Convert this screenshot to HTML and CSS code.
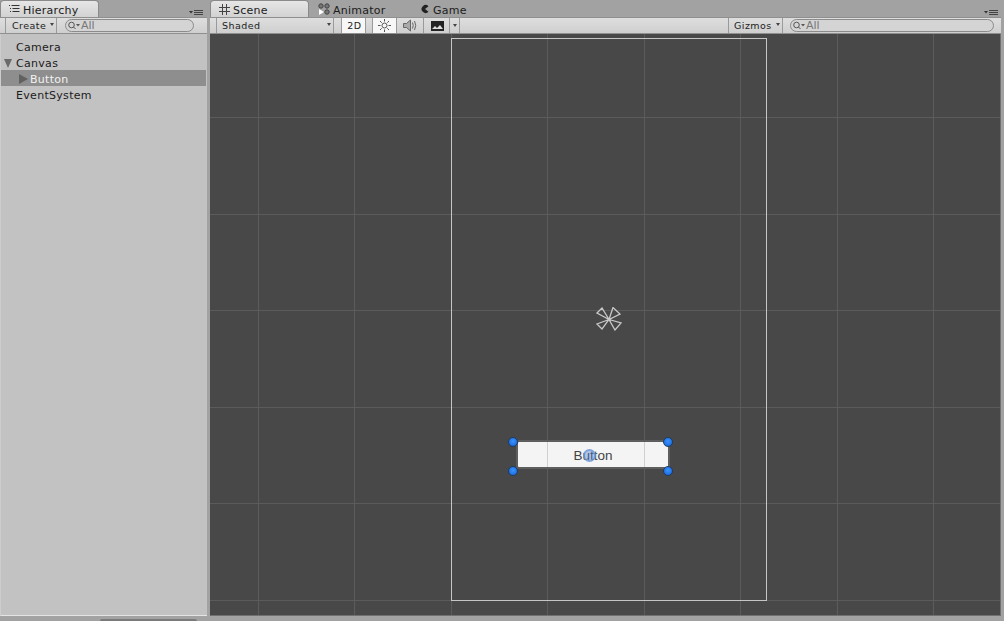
FILE: index.html
```html
<!DOCTYPE html>
<html lang="en">
<head>
<meta charset="utf-8">
<title>Unity Editor</title>
<link rel="stylesheet" href="styles.css">
</head>
<body>
<div class="editor">
  <section class="pane hierarchy">
    <div class="tabbar">
      <div class="tab active hier-tab">
        <svg class="tab-icon" width="12" height="10" viewBox="0 0 12 10"><path d="M1 1.500h1M3.500 1.500h8M2 4.500h1M4.500 4.500h7M2 7.500h1M4.500 7.500h7" stroke="#333" stroke-width="1" fill="none"/></svg>
        <span>Hierarchy</span>
      </div>
      <svg class="pane-menu" width="14" height="7" viewBox="0 0 14 7"><path d="M0 2h4L2 4.500z" fill="#333"/><path d="M5 1.500h9M5 3.500h9M5 5.500h9" stroke="#444" fill="none"/></svg>
    </div>
    <div class="toolbar">
      <div class="tool dropdown create"><span>Create</span><i class="caret"></i></div>
      <div class="search short">
        <svg width="13" height="9" viewBox="0 0 13 9"><circle cx="3.500" cy="4" r="2.800" fill="none" stroke="#555"/><path d="M5.500 6l2 2" stroke="#555"/><path d="M8 3h4l-2 2.500z" fill="#555"/></svg>
        <span>All</span>
      </div>
    </div>
    <ul class="tree">
      <li class="row lvl0">Camera</li>
      <li class="row lvl0"><i class="arrow down"></i>Canvas</li>
      <li class="row lvl1 selected"><i class="arrow right"></i>Button</li>
      <li class="row lvl0">EventSystem</li>
    </ul>
  </section>

  <section class="pane scene">
    <div class="tabbar">
      <div class="tab active scene-tab">
        <svg class="tab-icon" width="11" height="11" viewBox="0 0 11 11"><path d="M3.500 0v11M7.500 0v11M0 3.500h11M0 7.500h11" stroke="#444" fill="none"/></svg>
        <span>Scene</span>
      </div>
      <div class="tab animator-tab">
        <svg class="tab-icon" width="12" height="12" viewBox="0 0 12 12"><circle cx="3" cy="3" r="2.200" fill="#777" stroke="#444"/><circle cx="9" cy="3" r="2.200" fill="#777" stroke="#444"/><circle cx="9" cy="9" r="2.200" fill="#777" stroke="#444"/><path d="M1 6l5 3-5 3z" fill="#fff"/></svg>
        <span>Animator</span>
      </div>
      <div class="tab game-tab">
        <svg class="tab-icon" width="10" height="10" viewBox="0 0 10 10"><path d="M8.500 2.200A4 4 0 1 0 8.500 7.800L5 5z" fill="#222"/></svg>
        <span>Game</span>
      </div>
      <svg class="pane-menu" width="14" height="7" viewBox="0 0 14 7"><path d="M0 2h4L2 4.500z" fill="#333"/><path d="M5 1.500h9M5 3.500h9M5 5.500h9" stroke="#444" fill="none"/></svg>
    </div>
    <div class="toolbar">
      <div class="tool dropdown shaded"><span>Shaded</span><i class="caret"></i></div>
      <div class="tool on two-d"><span>2D</span></div>
      <div class="tool on icon-btn sun">
        <svg width="13" height="13" viewBox="0 0 13 13"><circle cx="6.500" cy="6.500" r="2.500" fill="none" stroke="#555"/><path d="M6.500 0v2.500M6.500 10.500V13M0 6.500h2.500M10.500 6.500H13M2 2l1.700 1.700M9.300 9.300L11 11M11 2L9.300 3.700M3.700 9.300L2 11" stroke="#555" fill="none"/></svg>
      </div>
      <div class="tool icon-btn sound">
        <svg width="15" height="13" viewBox="0 0 15 13"><path d="M0.500 4.500h3L7.500 1v11L3.500 8.500h-3z" fill="#aaa" stroke="#666"/><path d="M9.500 3.500q1.500 3 0 6M11.500 2q2.500 4.500 0 9" stroke="#666" fill="none"/></svg>
      </div>
      <div class="tool icon-btn picture">
        <svg width="13" height="10" viewBox="0 0 13 10"><rect width="13" height="10" fill="#222"/><path d="M1 8l3-3 2 2 3-3 3 4z" fill="#ddd"/></svg>
      </div>
      <div class="tool caret-btn"><i class="caret"></i></div>
      <div class="spring"></div>
      <div class="tool dropdown gizmos"><span>Gizmos</span><i class="caret"></i></div>
      <div class="search long">
        <svg width="13" height="9" viewBox="0 0 13 9"><circle cx="3.500" cy="4" r="2.800" fill="none" stroke="#555"/><path d="M5.500 6l2 2" stroke="#555"/><path d="M8 3h4l-2 2.500z" fill="#555"/></svg>
        <span>All</span>
      </div>
    </div>
    <div class="viewport">
      <svg class="grid" width="792" height="582" viewBox="0 0 792 582">
        <path d="M48.500 0v582M144.500 0v582M241.500 0v582M337.500 0v582M434.500 0v582M530.500 0v582M627.500 0v582M723.500 0v582M0 83.500h792M0 180.500h792M0 276.500h792M0 373.500h792M0 469.500h792M0 566.500h792" stroke="#5b5b5b" fill="none"/>
      </svg>
      <div class="canvas-frame"></div>
      <svg class="cam-gizmo" width="26" height="24" viewBox="0 0 26 24">
        <path d="M13 12.500L1 6 6 1zM13 12.500L17 0.500 24 7zM13 12.500L1 17 6 22zM13 12.500L25 16 19 23z" fill="none" stroke="#c9c9c9" stroke-width="1.300"/>
      </svg>
      <div class="ui-button">
        <div class="ui-guide g1"></div>
        <div class="ui-guide g2"></div>
        <span>Button</span>
        <i class="pivot"></i>
      </div>
      <i class="handle h-tl"></i>
      <i class="handle h-tr"></i>
      <i class="handle h-bl"></i>
      <i class="handle h-br"></i>
    </div>
  </section>
</div>
<div class="statusbar"><i class="scroll-thumb"></i></div>
</body>
</html>
```
FILE: styles.css
```css
* { box-sizing: border-box; }
html, body { margin: 0; height: 100%; }
body {
  width: 1004px;
  height: 621px;
  overflow: hidden;
  background: #a2a2a2;
  font-family: "DejaVu Sans", sans-serif;
  font-size: 11px;
  color: #1a1a1a;
  display: flex;
  flex-direction: column;
}
.editor { display: flex; height: 616px; }
.pane { display: flex; flex-direction: column; }
.hierarchy { width: 207px; }
.scene { width: 791px; margin-left: 3px; }

.tabbar { display: flex; height: 17px; position: relative; flex: none; }
.tab {
  display: flex;
  align-items: center;
  gap: 3px;
  height: 17px;
  padding-left: 9px;
  letter-spacing: 0.25px;
  line-height: 17px;
  padding-top: 3px;
  color: #1c1c1c;
}
.tab.active {
  background: linear-gradient(#e6e6e6, #d2d2d2);
  border: 1px solid #8a8a8a;
  border-bottom: 0;
  border-radius: 4px 4px 0 0;
}
.hier-tab { width: 99px; padding-left: 7px; }
.scene-tab { width: 99px; padding-left: 8px; }
.animator-tab { width: 82px; }
.game-tab { padding-left: 29px; }
.tab-icon { flex: none; margin-top: -3px; }
.pane-menu { position: absolute; right: 3px; top: 9px; }
.hierarchy .pane-menu { right: 4px; }

.toolbar {
  display: flex;
  align-items: stretch;
  height: 17px;
  flex: none;
  background: linear-gradient(#dedede, #cfcfcf);
  border-top: 1px solid #8f8f8f;
  border-bottom: 1px solid #8f8f8f;
  padding-left: 5px;
}
.scene .toolbar { padding-left: 6px; }
.tool {
  display: flex;
  align-items: center;
  border-right: 1px solid #9a9a9a;
  font-size: 9.500px;
  letter-spacing: 0.45px;
  color: #222;
}
.dropdown { position: relative; padding-left: 5px; }
.caret {
  display: block;
  width: 0;
  height: 0;
  border-left: 2.500px solid transparent;
  border-right: 2.500px solid transparent;
  border-top: 3px solid #444;
}
.dropdown .caret { position: absolute; right: 2px; top: 5px; }
.toolbar > .dropdown:first-child { border-left: 1px solid #9a9a9a; }
.create { width: 52px; padding-left: 6px; }
.shaded { width: 118px; }
.on { background: #f7f7f7; }
.two-d { width: 25px; justify-content: center; margin-left: 7px; padding-left: 2px; border-left: 1px solid #9a9a9a; }
.icon-btn { justify-content: center; }
.sun { width: 25px; margin-left: 6px; border-left: 1px solid #9a9a9a; }
.sound { width: 27px; }
.picture { width: 26px; padding-left: 2px; }
.caret-btn { width: 10px; justify-content: center; }
.spring { flex: 1; }
.gizmos { width: 55px; padding-left: 5px; border-left: 1px solid #9a9a9a; }

.search {
  display: flex;
  align-items: center;
  height: 13px;
  align-self: center;
  border: 1px solid #8b8b8b;
  border-radius: 7px;
  background: #d4d4d4;
  padding-left: 2px;
  color: #777;
  line-height: 11px;
  font-size: 11px;
}
.search span { margin-top: -1px; }
.short { width: 129px; margin-left: 8px; }
.long { width: 204px; margin-left: 7px; margin-right: 7px; }

.tree {
  list-style: none;
  margin: 0;
  padding: 4px 0 0;
  flex: 1;
  background: #c2c2c2;
  border-bottom: 1px solid #e4e4e4;
  border-left: 1px solid #cdcdcd;
}
.row {
  height: 16px;
  line-height: 16px;
  padding-top: 2px;
  position: relative;
  letter-spacing: 0.3px;
  color: #1c1c1c;
}
.lvl0 { padding-left: 15px; }
.lvl1 { padding-left: 29px; }
.selected { background: #8e8e8e; color: #f2f2f2; width: 205px; }
.arrow { position: absolute; width: 0; height: 0; }
.arrow.down {
  left: 3px;
  top: 5px;
  border-left: 4.500px solid transparent;
  border-right: 4.500px solid transparent;
  border-top: 9px solid #6a6a6a;
}
.arrow.right {
  left: 18px;
  top: 4px;
  border-top: 5px solid transparent;
  border-bottom: 5px solid transparent;
  border-left: 9px solid #616161;
}

.viewport {
  position: relative;
  width: 791px;
  height: 582px;
  background: #484848;
  border-bottom: 1px solid #707070;
  border-right: 1px solid #707070;
  overflow: hidden;
}
.grid { position: absolute; left: 0; top: 0; }
.canvas-frame {
  position: absolute;
  left: 241px;
  top: 4px;
  width: 316px;
  height: 563px;
  border: 1px solid #c6c6c6;
}
.cam-gizmo { position: absolute; left: 386px; top: 273px; }
.ui-button {
  position: absolute;
  left: 306px;
  top: 406px;
  width: 154px;
  height: 29px;
  padding-top: 1px;
  background: #f4f4f4;
  border: 2px solid #5e5e5e;
  border-radius: 3px;
  display: flex;
  align-items: center;
  justify-content: center;
  font-family: "Liberation Sans", sans-serif;
  font-size: 13.500px;
  color: #444;
}
.ui-guide { position: absolute; top: 0; bottom: 0; width: 1px; background: #cfcfcf; }
.g1 { left: 29px; }
.g2 { left: 126px; }
.pivot {
  position: absolute;
  left: 65px;
  top: 7px;
  width: 13px;
  height: 13px;
  border-radius: 50%;
  background: rgba(70, 130, 220, 0.4);
  border: 2px solid rgba(110, 150, 210, 0.7);
}
.handle {
  position: absolute;
  width: 10px;
  height: 10px;
  border-radius: 50%;
  background: radial-gradient(circle at 50% 40%, #3a94ff, #1462d4);
  border: 1px solid #1d3b66;
}
.h-tl { left: 298px; top: 403px; }
.h-tr { left: 453px; top: 403px; }
.h-bl { left: 298px; top: 432px; }
.h-br { left: 453px; top: 432px; }

.statusbar { flex: 1; position: relative; }
.scroll-thumb {
  position: absolute;
  left: 100px;
  bottom: 0;
  width: 97px;
  height: 2px;
  border-radius: 2px 2px 0 0;
  background: #7a7a7a;
}
```
